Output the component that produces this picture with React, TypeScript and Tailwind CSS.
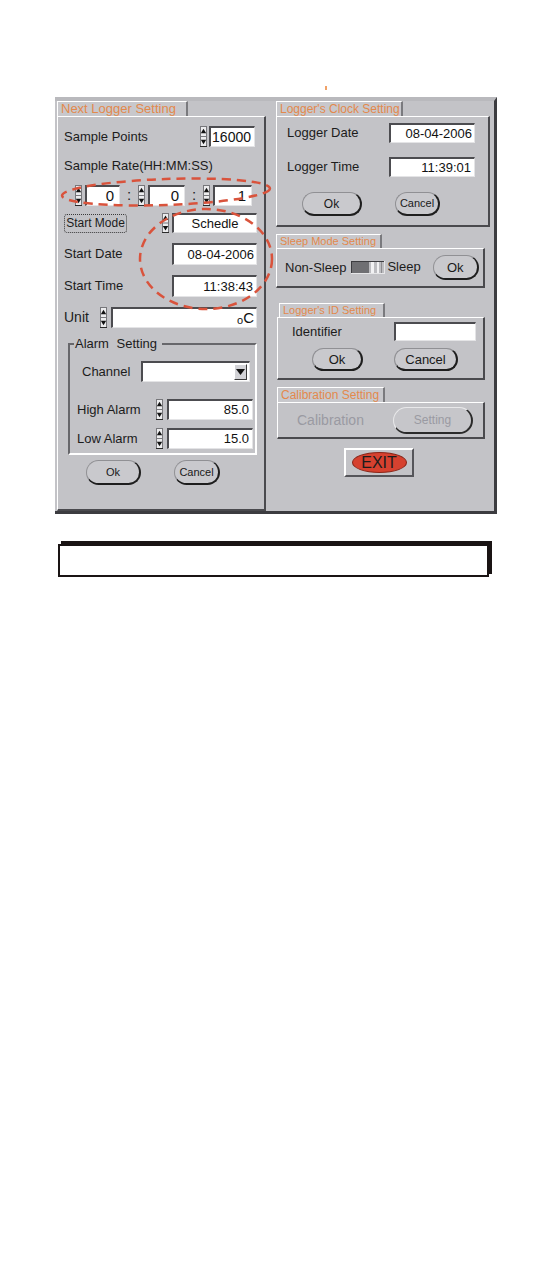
import React from 'react';

const FONT = "font-['Liberation_Sans',Arial,sans-serif]";

const Spinner = ({ h = 21, className = '' }: { h?: number; className?: string }) => {
  const m = h / 2;
  return (
    <svg width="7" height={h} viewBox={`0 0 7 ${h}`} className={`block shrink-0 ${className}`}>
      <rect x="0.5" y="0.5" width="6" height={h - 1} fill="#ececee" stroke="#77777b" />
      <line x1="0.5" x2="6.5" y1={m} y2={m} stroke="#77777b" />
      <line x1="0" x2="7" y1={h - 0.5} y2={h - 0.5} stroke="#2a2a2a" />
      <polygon points={`3.5,${m / 2 - 2.5} 6.2,${m / 2 + 2} 0.8,${m / 2 + 2}`} fill="#111" />
      <polygon points={`0.8,${m + m / 2 - 2} 6.2,${m + m / 2 - 2} 3.5,${m + m / 2 + 2.5}`} fill="#111" />
    </svg>
  );
};

const Field = ({ className = '', children }: { className?: string; children?: React.ReactNode }) => (
  <div
    className={`flex items-center bg-white border-t-2 border-l-2 border-t-[#4c4c50] border-l-[#4c4c50] border-r border-b border-r-[#e4e4e6] border-b-[#e4e4e6] text-[#111] ${className}`}
  >
    {children}
  </div>
);

const Pill = ({ className = '', children }: { className?: string; children: React.ReactNode }) => (
  <button
    type="button"
    className={`flex items-center justify-center rounded-full bg-[#c9c9cd] border border-t-[#909094] border-l-[#909094] border-r-2 border-b-2 border-r-[#1e1e1e] border-b-[#1e1e1e] text-[#1a1a1a] leading-none ${className}`}
  >
    {children}
  </button>
);

const Tab = ({ className = '', children }: { className?: string; children: React.ReactNode }) => (
  <div
    className={`flex items-end pl-[3px] pb-[1px] bg-[#c8c8cc] border-t border-l border-white border-r-2 border-r-[#7a7a7e] text-[#e3894c] leading-none whitespace-nowrap ${className}`}
  >
    {children}
  </div>
);

const Box = ({ className = '', children }: { className?: string; children?: React.ReactNode }) => (
  <div className={`border-t border-l border-white border-r-2 border-b-2 border-r-[#4a4a4e] border-b-[#4a4a4e] ${className}`}>
    {children}
  </div>
);

const LeftPanel = () => (
  <div className="w-[209px] flex flex-col">
    <Tab className="w-[131px] h-[15px] text-[13px]">Next Logger Setting</Tab>
    <Box className="h-[395px] flex flex-col pl-[6px] pr-[7px] text-[13px] text-[#1c1c1c]">
      {/* Sample points */}
      <div className="mt-[9px] h-[21px] flex items-center">
        <span>Sample Points</span>
        <Spinner h={21} className="ml-auto" />
        <Field className="ml-[2px] mr-[2px] w-[46px] h-full justify-end pr-[3px] text-[14px]">16000</Field>
      </div>

      <div className="mt-[11px] h-[16px] leading-[16px]">Sample Rate(HH:MM:SS)</div>

      {/* HH:MM:SS */}
      <div className="mt-[11px] ml-[11px] h-[21px] flex items-center text-[15px]">
        <Spinner h={21} />
        <Field className="ml-[3px] w-[35px] h-full justify-end pr-[5px]">0</Field>
        <span className="w-[18px] text-center text-[15px]">:</span>
        <Spinner h={21} />
        <Field className="ml-[3px] w-[37px] h-full justify-end pr-[5px]">0</Field>
        <span className="w-[18px] text-center text-[15px]">:</span>
        <Spinner h={21} />
        <Field className="ml-[3px] w-[39px] h-full justify-end pr-[5px]">1</Field>
      </div>

      {/* Start mode */}
      <div className="mt-[7px] h-[20px] flex items-center">
        <div className="w-[63px] h-[19px] flex items-center justify-center border border-dotted border-[#3a3a3a] rounded-[3px] text-[12px]">
          Start Mode
        </div>
        <Spinner h={20} className="ml-auto" />
        <Field className="ml-[3px] w-[85px] h-full justify-center">Schedle</Field>
      </div>

      <div className="mt-[10px] h-[22px] flex items-center">
        <span>Start Date</span>
        <Field className="ml-auto w-[85px] h-full justify-end pr-[2px]">08-04-2006</Field>
      </div>

      <div className="mt-[10px] h-[22px] flex items-center">
        <span>Start Time</span>
        <Field className="ml-auto w-[85px] h-full justify-end pr-[3px]">11:38:43</Field>
      </div>

      <div className="mt-[10px] h-[21px] flex items-center">
        <span className="text-[14px]">Unit</span>
        <Spinner h={21} className="ml-auto" />
        <Field className="ml-[4px] w-[146px] h-full justify-end pr-[2px] text-[15px]">
          <span className="text-[11px] translate-y-[2px]">o</span>C
        </Field>
      </div>

      {/* Alarm group */}
      <fieldset className="mt-[8px] ml-[4px] w-[189px] border-t-2 border-l-2 border-t-[#67676b] border-l-[#67676b] border-r-2 border-b-2 border-r-white border-b-white pb-[4px]">
        <legend className="ml-[4px] pl-[1px] pr-[5px] text-[13px] leading-[15px] [word-spacing:4px]">Alarm Setting</legend>
        <div className="mt-[10px] h-[21px] flex items-center pl-[12px] pr-[5px]">
          <span>Channel</span>
          <Field className="ml-auto w-[109px] h-full justify-end pr-[2px]">
            <div className="w-[13px] h-[16px] flex items-center justify-center bg-[#d2d2d6] border-t border-l border-white border-r border-b border-r-[#3a3a3a] border-b-[#3a3a3a]">
              <svg width="9" height="6" viewBox="0 0 9 6">
                <polygon points="0,0 9,0 4.5,6" fill="#111" />
              </svg>
            </div>
          </Field>
        </div>
        <div className="mt-[17px] h-[21px] flex items-center pl-[7px] pr-[2px]">
          <span>High Alarm</span>
          <Spinner h={21} className="ml-auto" />
          <Field className="ml-[4px] w-[86px] h-full justify-end pr-[3px]">85.0</Field>
        </div>
        <div className="mt-[8px] h-[21px] flex items-center pl-[7px] pr-[2px]">
          <span>Low Alarm</span>
          <Spinner h={21} className="ml-auto" />
          <Field className="ml-[4px] w-[86px] h-full justify-end pr-[3px]">15.0</Field>
        </div>
      </fieldset>

      <div className="mt-[5px] h-[25px] flex">
        <Pill className="ml-[22px] w-[55px] h-full text-[11px]">Ok</Pill>
        <Pill className="ml-[33px] w-[46px] h-full text-[11px]">Cancel</Pill>
      </div>
    </Box>
  </div>
);

const SleepSwitch = () => (
  <svg width="34" height="13" viewBox="0 0 34 13" className="block shrink-0">
    <rect x="0" y="0" width="34" height="13" fill="#6f6f73" />
    <rect x="18" y="1" width="15" height="11" fill="#bdbdc1" />
    <rect x="20" y="1" width="3" height="11" fill="#f2f2f4" />
    <rect x="26" y="1" width="2" height="11" fill="#f2f2f4" />
    <line x1="30.5" x2="30.5" y1="1" y2="12" stroke="#8c8c90" />
    <line x1="0" x2="34" y1="0.5" y2="0.5" stroke="#3c3c40" />
    <line x1="0.5" x2="0.5" y1="0" y2="13" stroke="#3c3c40" />
    <line x1="0" x2="34" y1="12.5" y2="12.5" stroke="#e6e6e8" />
    <line x1="33.5" x2="33.5" y1="0" y2="13" stroke="#e6e6e8" />
  </svg>
);

const RightPanel = () => (
  <div className="w-[215px] flex flex-col text-[13px] text-[#1c1c1c]">
    {/* Clock */}
    <Tab className="w-[127px] h-[15px] text-[12px]">Logger's Clock Setting</Tab>
    <Box className="w-[214px] h-[111px] flex flex-col pl-[10px] pr-[13px]">
      <div className="mt-[6px] h-[20px] flex items-center">
        <span>Logger Date</span>
        <Field className="ml-auto w-[86px] h-full justify-end pr-[2px]">08-04-2006</Field>
      </div>
      <div className="mt-[14px] h-[20px] flex items-center">
        <span>Logger Time</span>
        <Field className="ml-auto w-[86px] h-full justify-end pr-[3px]">11:39:01</Field>
      </div>
      <div className="mt-[15px] h-[24px] flex">
        <Pill className="ml-[15px] w-[60px] h-full text-[12px]">Ok</Pill>
        <Pill className="ml-[33px] w-[45px] h-full text-[11px]">Cancel</Pill>
      </div>
    </Box>

    {/* Sleep mode */}
    <Tab className="mt-[7px] w-[106px] h-[14px] text-[11px]">Sleep Mode Setting</Tab>
    <Box className="w-[209px] h-[40px] flex items-center pl-[8px]">
      <span>Non-Sleep</span>
      <div className="ml-[5px]">
        <SleepSwitch />
      </div>
      <span className="ml-[2px] -translate-y-[1px]">Sleep</span>
      <Pill className="ml-[12px] w-[46px] h-[25px] text-[13px]">Ok</Pill>
    </Box>

    {/* ID */}
    <Tab className="mt-[15px] ml-[3px] w-[106px] h-[14px] text-[11px]">Logger's ID Setting</Tab>
    <Box className="ml-[1px] w-[208px] h-[63px] flex flex-col pl-[14px] pr-[7px]">
      <div className="mt-[4px] h-[19px] flex items-center">
        <span>Identifier</span>
        <Field className="ml-auto w-[82px] h-full" />
      </div>
      <div className="mt-[7px] h-[23px] flex">
        <Pill className="ml-[20px] w-[51px] h-full text-[13px]">Ok</Pill>
        <Pill className="ml-[31px] w-[64px] h-full text-[13px]">Cancel</Pill>
      </div>
    </Box>

    {/* Calibration */}
    <Tab className="mt-[7px] ml-[1px] w-[108px] h-[15px] text-[12px]">Calibration Setting</Tab>
    <Box className="ml-[1px] w-[208px] h-[37px] flex items-center pl-[19px] pr-[10px]">
      <span className="text-[14px] text-[#9a9aa2]">Calibration</span>
      <button
        type="button"
        className="ml-auto w-[80px] h-[27px] flex items-center justify-center rounded-full bg-[#c6c6ca] border border-t-[#e8e8ea] border-l-[#e8e8ea] border-r-2 border-b-2 border-r-[#2a2a2a] border-b-[#2a2a2a] text-[12px] text-[#9a9aa2]"
      >
        Setting
      </button>
    </Box>

    {/* Exit */}
    <button
      type="button"
      className="mt-[9px] ml-[68px] w-[70px] h-[29px] flex items-center justify-center bg-[#c3c3c7] border-2 border-white border-r-[#55555a] border-b-[#55555a]"
    >
      <span className="w-[55px] h-[21px] rounded-[50%] bg-[#d6412f] border border-[#8a2518] flex items-center justify-center text-[16px] text-[#1c1c1c] leading-none">
        EXIT
      </span>
    </button>
  </div>
);

export default function App() {
  return (
    <div className={`relative w-[555px] h-[1278px] bg-white ${FONT}`}>
      <div className="h-[97px] pt-[86px] pl-[325px]">
        <div className="w-[2px] h-[4px] bg-[#f0a268]" />
      </div>

      <div className="ml-[55px] w-[442px] h-[417px] bg-[#c3c3c7] border-t-4 border-t-[#b9b9bd] border-r-[3px] border-b-[3px] border-r-[#3c3c40] border-b-[#3c3c40] pl-[2px] flex gap-[10px]">
        <LeftPanel />
        <RightPanel />
      </div>

      <div className="ml-[58px] mt-[30px] w-[431px] h-[33px] border-2 border-[#1a1414] shadow-[3px_-3px_0_0_#1a1414]" />

      {/* red dashed annotations */}
      <svg width="555" height="600" viewBox="0 0 555 600" className="absolute left-0 top-0 pointer-events-none">
        <ellipse
          cx="166"
          cy="192"
          rx="104"
          ry="13"
          transform="rotate(-2 166 192)"
          fill="none"
          stroke="#d9533c"
          strokeWidth="2.5"
          strokeDasharray="9 6"
        />
        <ellipse
          cx="206"
          cy="259"
          rx="66"
          ry="50"
          fill="none"
          stroke="#d9533c"
          strokeWidth="2.5"
          strokeDasharray="9 6"
        />
      </svg>
    </div>
  );
}
